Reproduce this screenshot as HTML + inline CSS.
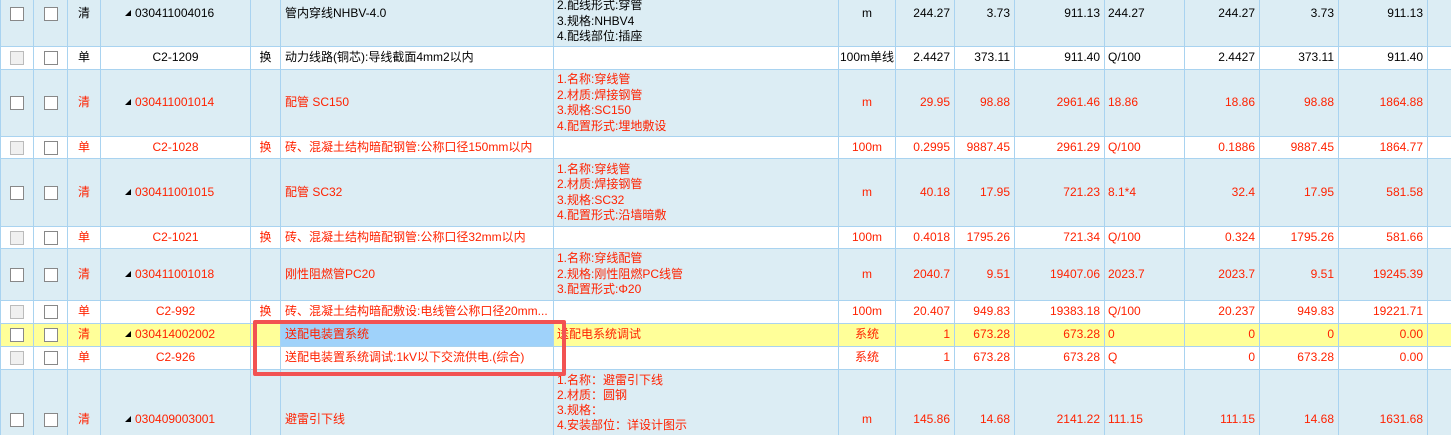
<!DOCTYPE html>
<html><head><meta charset="utf-8"><style>
*{box-sizing:border-box;margin:0;padding:0}
html,body{width:1451px;height:435px;overflow:hidden}
body{background:#dcedf4;font-family:"Liberation Sans","Noto Sans CJK SC",sans-serif;font-size:12px;}
#wrap{position:relative;width:1451px;height:435px;overflow:hidden}
table{position:absolute;left:0;top:-20px;border-collapse:collapse;table-layout:fixed;width:1451px}
td{border:1px solid #a9d3f0;overflow:hidden;white-space:nowrap;vertical-align:middle;padding:0 4px;line-height:15.5px;color:#000}
tr.q td{background:#dcedf4}
tr.d td{background:#fff}
tr.y td{background:#ffff99}
tr.r td{color:#ff2200}
tr.last td{vertical-align:top;padding-top:42px;border-bottom:none}
tr.last td.top{padding-top:3px;line-height:15px}
.c{text-align:center}.n{text-align:right}.l{text-align:left;padding-left:3px}
.cb{display:inline-block;width:14px;height:14px;border:1px solid #888;background:#fff;vertical-align:middle}
.cg{border-color:#bbb;background:#f0f0f0}
.tri{display:inline-block;width:0;height:0;border-left:6px solid transparent;border-bottom:6px solid #000;margin-right:4px;vertical-align:1px}
.code{padding-left:24px}
.box{position:absolute;left:253px;top:320px;width:313px;height:56px;border:4px solid #f25252;border-radius:2px}
</style></head><body><div id="wrap">
<table>
<colgroup><col style="width:33px"><col style="width:34px"><col style="width:33px"><col style="width:150px"><col style="width:30px"><col style="width:273px"><col style="width:285px"><col style="width:57px"><col style="width:59px"><col style="width:60px"><col style="width:90px"><col style="width:80px"><col style="width:75px"><col style="width:79px"><col style="width:89px"><col style="width:24px"></colgroup>
<tr class="q" style="height:66px"><td class="c"><span class="cb"></span></td><td class="c"><span class="cb"></span></td><td class="c">清</td><td class="code"><span class="tri"></span>030411004016</td><td></td><td>管内穿线NHBV-4.0</td><td class="l">1.名称:穿线<br>2.配线形式:穿管<br>3.规格:NHBV4<br>4.配线部位:插座</td><td class="c">m</td><td class="n">244.27</td><td class="n">3.73</td><td class="n">911.13</td><td class="l">244.27</td><td class="n">244.27</td><td class="n">3.73</td><td class="n">911.13</td><td></td></tr>
<tr class="d" style="height:23px"><td class="c"><span class="cb cg"></span></td><td class="c"><span class="cb"></span></td><td class="c">单</td><td class="c">C2-1209</td><td class="c">换</td><td>动力线路(铜芯):导线截面4mm2以内</td><td></td><td class="c" style="padding:0">100m单线</td><td class="n">2.4427</td><td class="n">373.11</td><td class="n">911.40</td><td class="l">Q/100</td><td class="n">2.4427</td><td class="n">373.11</td><td class="n">911.40</td><td></td></tr>
<tr class="q r" style="height:67px"><td class="c"><span class="cb"></span></td><td class="c"><span class="cb"></span></td><td class="c">清</td><td class="code"><span class="tri"></span>030411001014</td><td></td><td>配管 SC150</td><td class="l">1.名称:穿线管<br>2.材质:焊接钢管<br>3.规格:SC150<br>4.配置形式:埋地敷设</td><td class="c">m</td><td class="n">29.95</td><td class="n">98.88</td><td class="n">2961.46</td><td class="l">18.86</td><td class="n">18.86</td><td class="n">98.88</td><td class="n">1864.88</td><td></td></tr>
<tr class="d r" style="height:22px"><td class="c"><span class="cb cg"></span></td><td class="c"><span class="cb"></span></td><td class="c">单</td><td class="c">C2-1028</td><td class="c">换</td><td>砖、混凝土结构暗配钢管:公称口径150mm以内</td><td></td><td class="c">100m</td><td class="n">0.2995</td><td class="n">9887.45</td><td class="n">2961.29</td><td class="l">Q/100</td><td class="n">0.1886</td><td class="n">9887.45</td><td class="n">1864.77</td><td></td></tr>
<tr class="q r" style="height:68px"><td class="c"><span class="cb"></span></td><td class="c"><span class="cb"></span></td><td class="c">清</td><td class="code"><span class="tri"></span>030411001015</td><td></td><td>配管 SC32</td><td class="l">1.名称:穿线管<br>2.材质:焊接钢管<br>3.规格:SC32<br>4.配置形式:沿墙暗敷</td><td class="c">m</td><td class="n">40.18</td><td class="n">17.95</td><td class="n">721.23</td><td class="l">8.1*4</td><td class="n">32.4</td><td class="n">17.95</td><td class="n">581.58</td><td></td></tr>
<tr class="d r" style="height:22px"><td class="c"><span class="cb cg"></span></td><td class="c"><span class="cb"></span></td><td class="c">单</td><td class="c">C2-1021</td><td class="c">换</td><td>砖、混凝土结构暗配钢管:公称口径32mm以内</td><td></td><td class="c">100m</td><td class="n">0.4018</td><td class="n">1795.26</td><td class="n">721.34</td><td class="l">Q/100</td><td class="n">0.324</td><td class="n">1795.26</td><td class="n">581.66</td><td></td></tr>
<tr class="q r" style="height:52px"><td class="c"><span class="cb"></span></td><td class="c"><span class="cb"></span></td><td class="c">清</td><td class="code"><span class="tri"></span>030411001018</td><td></td><td>刚性阻燃管PC20</td><td class="l">1.名称:穿线配管<br>2.规格:刚性阻燃PC线管<br>3.配置形式:Φ20</td><td class="c">m</td><td class="n">2040.7</td><td class="n">9.51</td><td class="n">19407.06</td><td class="l">2023.7</td><td class="n">2023.7</td><td class="n">9.51</td><td class="n">19245.39</td><td></td></tr>
<tr class="d r" style="height:23px"><td class="c"><span class="cb cg"></span></td><td class="c"><span class="cb"></span></td><td class="c">单</td><td class="c">C2-992</td><td class="c">换</td><td>砖、混凝土结构暗配敷设:电线管公称口径20mm...</td><td></td><td class="c">100m</td><td class="n">20.407</td><td class="n">949.83</td><td class="n">19383.18</td><td class="l">Q/100</td><td class="n">20.237</td><td class="n">949.83</td><td class="n">19221.71</td><td></td></tr>
<tr class="y r" style="height:23px"><td class="c"><span class="cb"></span></td><td class="c"><span class="cb"></span></td><td class="c">清</td><td class="code"><span class="tri"></span>030414002002</td><td></td><td style="background:#9fd2fa">送配电装置系统</td><td class="l">送配电系统调试</td><td class="c">系统</td><td class="n">1</td><td class="n">673.28</td><td class="n">673.28</td><td class="l">0</td><td class="n">0</td><td class="n">0</td><td class="n">0.00</td><td></td></tr>
<tr class="d r" style="height:23px"><td class="c"><span class="cb cg"></span></td><td class="c"><span class="cb"></span></td><td class="c">单</td><td class="c">C2-926</td><td></td><td>送配电装置系统调试:1kV以下交流供电.(综合)</td><td></td><td class="c">系统</td><td class="n">1</td><td class="n">673.28</td><td class="n">673.28</td><td class="l">Q</td><td class="n">0</td><td class="n">673.28</td><td class="n">0.00</td><td></td></tr>
<tr class="q r last" style="height:66px"><td class="c"><span class="cb"></span></td><td class="c"><span class="cb"></span></td><td class="c">清</td><td class="code"><span class="tri"></span>030409003001</td><td></td><td>避雷引下线</td><td class="l top">1.名称：避雷引下线<br>2.材质：圆钢<br>3.规格：<br>4.安装部位：详设计图示</td><td class="c">m</td><td class="n">145.86</td><td class="n">14.68</td><td class="n">2141.22</td><td class="l">111.15</td><td class="n">111.15</td><td class="n">14.68</td><td class="n">1631.68</td><td></td></tr>
</table>
<div class="box"></div>
</div></body></html>
